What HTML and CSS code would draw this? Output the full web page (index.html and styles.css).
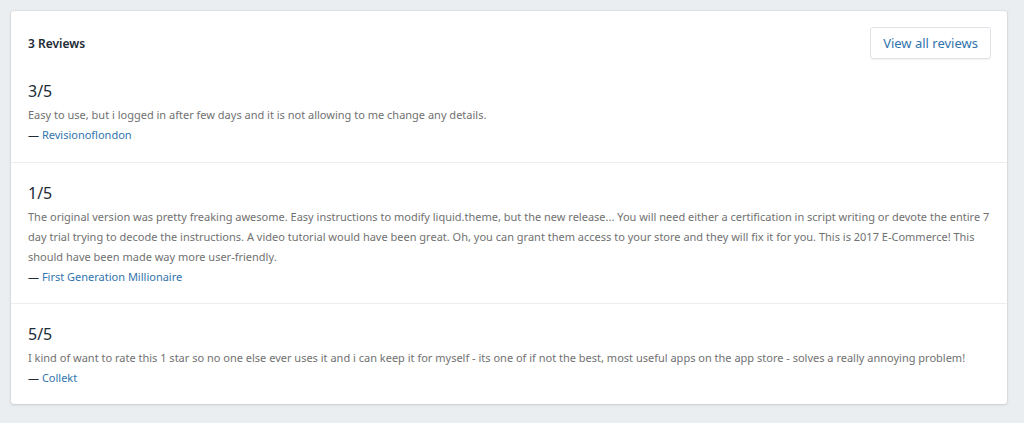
FILE: index.html
```html
<!DOCTYPE html>
<html lang="en">
<head>
    <meta charset="UTF-8">
    <meta name="viewport" content="width=device-width, initial-scale=1.0">
    <title>Reviews</title>
    <link rel="stylesheet" href="styles.css">
</head>
<body>
    <div class="card">
        <div class="card-header">
            <h2>3 Reviews</h2>
            <a href="#" class="btn">View all reviews</a>
        </div>
        <div class="review first">
            <h3>3/5</h3>
            <p>Easy to use, but i logged in after few days and it is not allowing to me change any details.</p>
            <div class="author">&mdash; <a href="#">Revisionoflondon</a></div>
        </div>
        <div class="review">
            <h3>1/5</h3>
            <p>The original version was pretty freaking awesome. Easy instructions to modify liquid.theme, but the new release... You will need either a certification in script writing or devote the entire 7 day trial trying to decode the instructions. A video tutorial would have been great. Oh, you can grant them access to your store and they will fix it for you. This is 2017 E-Commerce! This should have been made way more user-friendly.</p>
            <div class="author">&mdash; <a href="#">First Generation Millionaire</a></div>
        </div>
        <div class="review">
            <h3>5/5</h3>
            <p>I kind of want to rate this 1 star so no one else ever uses it and i can keep it for myself - its one of if not the best, most useful apps on the app store - solves a really annoying problem!</p>
            <div class="author">&mdash; <a href="#">Collekt</a></div>
        </div>
    </div>
</body>
</html>
```

FILE: styles.css
```css
body {
    margin: 0;
    padding: 11px;
    font-family: "Noto Sans", sans-serif;
    background-color: #ebeef0;
    color: #212b36;
}
.card {
    width: 996px;
    background-color: #fff;
    border-radius: 3px;
    box-shadow: 0 0 0 1px rgba(63, 63, 68, 0.05), 0 1px 3px 0 rgba(63, 63, 68, 0.15);
}
.card-header {
    display: flex;
    justify-content: space-between;
    align-items: center;
    padding: 16px 16px 0 17px;
}
.card-header h2 {
    margin: 0;
    font-size: 12px;
    font-weight: 600;
}
.btn {
    display: inline-block;
    padding: 6px 12px;
    font-size: 13px;
    line-height: 18px;
    color: #3274ad;
    text-decoration: none;
    border: 1px solid #dfe3e8;
    border-radius: 3px;
    box-shadow: 0 1px 0 rgba(22, 29, 37, 0.05);
}
.review {
    padding: 18px 16px 16px 17px;
    border-top: 1px solid #ebeef0;
}
.review.first {
    border-top: none;
    padding-top: 20px;
    padding-bottom: 17px;
}
.review h3 {
    margin: 0 0 2px;
    font-size: 16px;
    font-weight: 400;
    line-height: 24px;
}
.review p {
    margin: 0;
    font-size: 11px;
    line-height: 20px;
    color: #717171;
}
.author {
    font-size: 11px;
    line-height: 20px;
}
.author a {
    color: #3274ad;
    text-decoration: none;
}
```
